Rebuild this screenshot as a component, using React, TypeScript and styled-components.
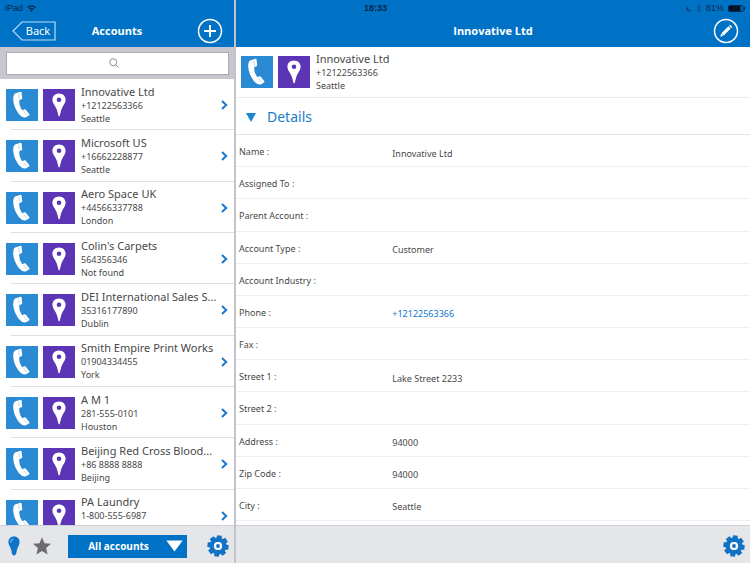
import React from "react";
import styled, { createGlobalStyle } from "styled-components";

const blue = "#0072c6";
const headingFont = `"Open Sans", "Noto Sans", sans-serif`;

const GlobalStyle = createGlobalStyle`
  *, *::before, *::after { box-sizing: border-box; }
  body { margin: 0; background: #fff; }
  body, button, input, select { font-family: "Noto Sans", "Open Sans", sans-serif; }
  button { padding: 0; border: 0; background: none; cursor: pointer; }
  h1, h2, h3, p, ul, dl, dd, dt { margin: 0; padding: 0; font-weight: 400; }
  svg { display: block; }
`;

const Page = styled.div`
  position: relative;
  display: flex;
  height: 100vh;
  min-height: 480px;
  overflow: hidden;
  color: #484848;
`;

const StatusBar = styled.div`
  position: absolute;
  inset: 0 0 auto 0;
  display: grid;
  grid-template-columns: 1fr auto 1fr;
  align-items: center;
  height: 16px;
  padding: 0 4px 0 5px;
  font: 9px/16px "Liberation Sans", sans-serif;
  color: #06264a;
`;

const StatusGroup = styled.div<{ $end?: boolean }>`
  display: flex;
  align-items: center;
  gap: 4px;
  justify-content: ${(p) => (p.$end ? "flex-end" : "flex-start")};
`;

const Clock = styled.time`
  font-weight: 700;
`;

const Sidebar = styled.aside`
  display: flex;
  flex-direction: column;
  flex: 0 0 236px;
  min-width: 0;
  border-right: 2px solid #c3c3cb;
`;

const Main = styled.main`
  display: flex;
  flex-direction: column;
  flex: 1;
  min-width: 0;
`;

const Header = styled.header`
  display: grid;
  grid-template-columns: 60px 1fr 60px;
  align-items: center;
  flex: none;
  height: 47px;
  padding-top: 15px;
  background: ${blue};
`;

const Title = styled.h1`
  grid-column: 2;
  font-family: ${headingFont};
  font-size: 11px;
  font-weight: 700;
  line-height: 16px;
  text-align: center;
  color: #fff;
`;

const BackButton = styled.button`
  position: relative;
  width: 44px;
  height: 20px;
  margin-left: 12px;
  padding-left: 8px;
  font-size: 11px;
  line-height: 18px;
  color: #fff;
`;

const BackOutline = styled.svg`
  position: absolute;
  inset: 0;
`;

const RoundButton = styled.button<{ $edge: number }>`
  justify-self: end;
  margin-right: ${(p) => p.$edge}px;
`;

const SearchBar = styled.label`
  position: relative;
  display: flex;
  flex: none;
  height: 32px;
  padding: 5px 5px 4px 6px;
  background: #c8c7cf;
`;

const SearchInput = styled.input`
  flex: 1;
  min-width: 0;
  border: 1px solid #acabb3;
  padding: 0 8px;
  background: #fff;
  font-size: 11px;
`;

const SearchIcon = styled.svg`
  position: absolute;
  inset: 0 6px 0 0;
  margin: auto;
`;

const ListViewport = styled.div`
  flex: 1;
  min-height: 0;
  overflow: hidden;
`;

const AccountList = styled.ul`
  display: grid;
  grid-template-columns: minmax(0, 1fr);
  grid-auto-rows: 1fr;
  height: calc(100% + 16px);
  list-style: none;
`;

const AccountRow = styled.li`
  position: relative;
  display: flex;
  align-items: center;
  padding: 1px 5px 0 6px;

  &::after {
    content: "";
    position: absolute;
    inset: auto 0 0 11px;
    border-bottom: 1px solid #dfdfe2;
  }
`;

const ContactBlock = styled.div`
  display: flex;
  align-items: center;
  gap: 5px;
  flex: 1;
  min-width: 0;
`;

const Tile = styled.button<{ $color: string }>`
  flex: none;
  width: 32px;
  height: 32px;
  background: ${(p) => p.$color};
`;

const ContactText = styled.div`
  flex: 1;
  min-width: 0;
  padding: 0 0 2px 1px;
`;

const Name = styled.h2`
  overflow: hidden;
  font-size: 11px;
  line-height: 15px;
  white-space: nowrap;
  text-overflow: ellipsis;
`;

const Line = styled.p`
  font-size: 9px;
  line-height: 13px;
`;

const Footer = styled.footer`
  display: flex;
  align-items: center;
  flex: none;
  height: 38px;
  padding: 3px 5px 0 7px;
  border-top: 1px solid #cfd0d5;
  background: #e4e6ea;
`;

const FooterButton = styled.button<{ $gap?: number; $end?: boolean }>`
  flex: none;
  margin-left: ${(p) => (p.$end ? "auto" : `${p.$gap ?? 0}px`)};
`;

const FilterBox = styled.label`
  position: relative;
  flex: 0 0 119px;
  margin-left: 16px;
`;

const FilterSelect = styled.select`
  display: block;
  width: 100%;
  height: 23px;
  padding: 0 28px 0 10px;
  border: 0;
  border-radius: 0;
  appearance: none;
  background: ${blue};
  font-family: ${headingFont};
  font-size: 10px;
  font-weight: 700;
  text-align: center;
  text-align-last: center;
  color: #fff;
`;

const FilterArrow = styled.svg`
  position: absolute;
  inset: 0 4px 0 auto;
  margin: auto 0;
  pointer-events: none;
`;

const Summary = styled.section`
  display: flex;
  flex: none;
  height: 51px;
  padding: 0 5px;
  border-bottom: 1px solid #e9ecf0;
`;

const SectionToggle = styled.button`
  display: flex;
  align-items: center;
  gap: 11px;
  flex: none;
  height: 37px;
  padding: 2px 10px 0;
  border-bottom: 1px solid #e2e5e8;
  font-size: 14px;
  line-height: 20px;
  color: #1a7dc8;
`;

const Fields = styled.dl`
  display: grid;
  grid-auto-rows: 1fr;
  flex: 1;
  min-height: 0;
  padding-bottom: 4px;
`;

const Field = styled.div`
  display: grid;
  grid-template-columns: 3fr 7fr;
  align-items: center;
  padding-left: 3px;
  border-bottom: 1px solid #edeff1;
  font-size: 9px;
  line-height: 14px;
`;

const FieldLabel = styled.dt`
  padding-top: 3px;
`;

const FieldValue = styled.dd`
  padding-top: 6px;
`;

const PhoneLink = styled.a`
  color: #0f74cc;
  text-decoration: none;
`;

function PhoneIcon() {
  return (
    <svg width="32" height="32" viewBox="0 0 32 32" aria-hidden="true">
      <path
        fill="#fff"
        d="M9 4.4 L14.6 2.8 Q15.5 2.8 15.6 3.8 L16.2 9.2 Q16.2 10 15.4 10.2 L13.4 10.9 Q12.4 15.6 16.3 21.3 L18.4 20.3 Q19.3 20 19.8 20.7 L23.4 25.2 Q23.8 26 23 26.6 L20 28.2 Q16.6 29.4 12.8 25 Q7.6 18.2 7.2 10.6 Q7.1 5.8 9 4.4Z"
      />
      <path d="M12.6 4.6 L13.4 9.4 M17.6 22.2 L20.6 26" stroke="#8cbfe8" strokeWidth="0.6" fill="none" />
    </svg>
  );
}

function PinIcon() {
  return (
    <svg width="32" height="32" viewBox="0 0 32 32" aria-hidden="true">
      <path
        fill="#fff"
        fillRule="evenodd"
        d="M16 4.4 C20 4.4 22.6 7.2 22.6 10.8 C22.6 14.6 19.2 17 18 22 L16.6 27.2 H15.6 L14.2 22 C13 17 9.4 14.6 9.4 10.8 C9.4 7.2 12 4.4 16 4.4Z M16 8.4 A2.3 2.3 0 1 0 16 13 A2.3 2.3 0 1 0 16 8.4Z"
      />
    </svg>
  );
}

function GearIcon() {
  const teeth = [0, 45, 90, 135, 180, 225, 270, 315];
  return (
    <svg width="22" height="22" viewBox="-11 -11 22 22" aria-hidden="true">
      <g fill="#1272c4">
        {teeth.map((angle) => (
          <path key={angle} d="M-2.8 -7 L-2.3 -10.6 H2.3 L2.8 -7Z" transform={`rotate(${angle + 8})`} />
        ))}
      </g>
      <circle r="6.2" fill="none" stroke="#1272c4" strokeWidth="4.4" />
      <circle r="4.1" fill="#f2f6fa" />
      <circle r="1.9" fill="#1272c4" />
    </svg>
  );
}

function Contact({ name, phone, city }: Account) {
  return (
    <ContactBlock>
      <Tile $color="#2b8ad4" aria-label={`Call ${name}`}>
        <PhoneIcon />
      </Tile>
      <Tile $color="#5c34b6" aria-label={`Show ${name} on map`}>
        <PinIcon />
      </Tile>
      <ContactText>
        <Name>{name}</Name>
        <Line>{phone}</Line>
        <Line>{city}</Line>
      </ContactText>
    </ContactBlock>
  );
}

type Account = { name: string; phone: string; city: string };

const accounts: Account[] = [
  { name: "Innovative Ltd", phone: "+12122563366", city: "Seattle" },
  { name: "Microsoft US", phone: "+16662228877", city: "Seattle" },
  { name: "Aero Space UK", phone: "+44566337788", city: "London" },
  { name: "Colin's Carpets", phone: "564356346", city: "Not found" },
  { name: "DEI International Sales S...", phone: "35316177890", city: "Dublin" },
  { name: "Smith Empire Print Works", phone: "01904334455", city: "York" },
  { name: "A M 1", phone: "281-555-0101", city: "Houston" },
  { name: "Beijing Red Cross Blood...", phone: "+86 8888 8888", city: "Beijing" },
  { name: "PA Laundry", phone: "1-800-555-6987", city: "Houston" },
];

const fields: [string, string][] = [
  ["Name", "Innovative Ltd"],
  ["Assigned To", ""],
  ["Parent Account", ""],
  ["Account Type", "Customer"],
  ["Account Industry", ""],
  ["Phone", "+12122563366"],
  ["Fax", ""],
  ["Street 1", "Lake Street 2233"],
  ["Street 2", ""],
  ["Address", "94000"],
  ["Zip Code", "94000"],
  ["City", "Seattle"],
];

export default function App() {
  return (
    <>
      <GlobalStyle />
      <Page>
        <Sidebar>
          <Header>
            <BackButton>
              <BackOutline width="44" height="20" viewBox="0 0 44 20" fill="none" stroke="#b9dcf7" aria-hidden="true">
                <path d="M10 1 H43 V19 H10 L1 10Z" strokeWidth="1.2" />
              </BackOutline>
              Back
            </BackButton>
            <Title>Accounts</Title>
            <RoundButton $edge={11} aria-label="Add account">
              <svg width="26" height="26" viewBox="0 0 26 26" fill="none" stroke="#fff" aria-hidden="true">
                <circle cx="13" cy="13" r="11.5" strokeWidth="1.5" />
                <path d="M13 7 V19 M7 13 H19" strokeWidth="2" />
              </svg>
            </RoundButton>
          </Header>
          <SearchBar>
            <SearchInput type="search" aria-label="Search accounts" />
            <SearchIcon width="10" height="10" viewBox="0 0 10 10" fill="none" stroke="#8c8c92" aria-hidden="true">
              <circle cx="4.2" cy="4.2" r="3.5" />
              <path d="M6.8 6.8 L9.6 9.6" />
            </SearchIcon>
          </SearchBar>
          <ListViewport>
            <AccountList>
              {accounts.map((account) => (
                <AccountRow key={account.name}>
                  <Contact {...account} />
                  <svg width="9" height="10" viewBox="0 0 9 10" fill="none" stroke="#1b78c8" strokeWidth="2" aria-hidden="true">
                    <path d="M2 1 L6.2 5 L2 9" />
                  </svg>
                </AccountRow>
              ))}
            </AccountList>
          </ListViewport>
          <Footer>
            <FooterButton aria-label="Tips">
              <svg width="14" height="20" viewBox="0 0 14 20" aria-hidden="true">
                <path
                  fill="#0f73c9"
                  d="M7 0.5 C10.6 0.5 12.6 3 12.6 6 C12.6 9.4 10.4 11.4 9.8 14.4 L9.2 17.6 Q8.6 19.5 7 19.5 Q5.4 19.5 4.9 17.6 L4.4 14.4 C3.8 11.4 1.4 9.4 1.4 6 C1.4 3 3.4 0.5 7 0.5Z"
                />
                <path d="M3.6 6.6 Q3.6 3.4 6.4 2.8" fill="none" stroke="#9fcbef" />
              </svg>
            </FooterButton>
            <FooterButton $gap={11} aria-label="Favourites">
              <svg width="20" height="18" viewBox="0 0 20 18" aria-hidden="true">
                <path
                  fill="#6c6c6e"
                  d="M10 0.3 L12.5 6.2 L19 6.8 L14.1 11 L15.6 17.4 L10 14 L4.4 17.4 L5.9 11 L1 6.8 L7.5 6.2Z"
                />
              </svg>
            </FooterButton>
            <FilterBox>
              <FilterSelect aria-label="Account filter">
                <option>All accounts</option>
              </FilterSelect>
              <FilterArrow width="17" height="12" viewBox="0 0 17 12" aria-hidden="true">
                <path d="M0.3 0.5 H16.7 L8.5 11.5Z" fill="#fff" />
              </FilterArrow>
            </FilterBox>
            <FooterButton $end aria-label="List settings">
              <GearIcon />
            </FooterButton>
          </Footer>
        </Sidebar>
        <Main>
          <Header>
            <Title>Innovative Ltd</Title>
            <RoundButton $edge={11} aria-label="Edit account">
              <svg width="26" height="26" viewBox="0 0 26 26" aria-hidden="true">
                <circle cx="13" cy="13" r="11.5" fill="none" stroke="#fff" strokeWidth="1.5" />
                <path d="M9.6 16.4 L16.6 9.4" stroke="#fff" strokeWidth="3.2" />
                <path d="M17.2 8.8 L18.2 7.8" stroke="#fff" strokeWidth="3.2" />
                <path d="M7.2 18.8 L8.2 15.6 L10.4 17.8Z" fill="#fff" />
              </svg>
            </RoundButton>
          </Header>
          <Summary>
            <Contact {...accounts[0]} />
          </Summary>
          <SectionToggle aria-expanded="true">
            <svg width="10" height="9" viewBox="0 0 10 9" aria-hidden="true">
              <path d="M0 0 H10 L5 9Z" fill="#1a86d0" />
            </svg>
            Details
          </SectionToggle>
          <Fields>
            {fields.map(([label, value]) => (
              <Field key={label}>
                <FieldLabel>{label} :</FieldLabel>
                <FieldValue>
                  {label === "Phone" ? <PhoneLink href={`tel:${value}`}>{value}</PhoneLink> : value}
                </FieldValue>
              </Field>
            ))}
          </Fields>
          <Footer>
            <FooterButton $end aria-label="Account settings">
              <GearIcon />
            </FooterButton>
          </Footer>
        </Main>
        <StatusBar>
          <StatusGroup>
            iPad
            <svg width="9" height="7" viewBox="0 0 9 7" fill="none" stroke="#06264a" aria-hidden="true">
              <path d="M0.5 2.6 Q4.5 -1 8.5 2.6 M2 4.4 Q4.5 2.2 7 4.4" strokeWidth="1.2" />
              <circle cx="4.5" cy="5.8" r="0.6" fill="#06264a" />
            </svg>
          </StatusGroup>
          <Clock>18:33</Clock>
          <StatusGroup $end>
            <svg width="6" height="7" viewBox="0 0 6 7" aria-hidden="true">
              <path d="M2 0.5 A3.2 3.2 0 1 0 5.8 5.2 A3.4 3.4 0 0 1 2 0.5Z" fill="#0a4a86" />
            </svg>
            <svg width="6" height="9" viewBox="0 0 6 9" fill="none" stroke="#0a4a86" strokeWidth="0.8" aria-hidden="true">
              <path d="M0.8 2.4 L5 6.4 L3 8.4 V0.6 L5 2.6 L0.8 6.6" />
            </svg>
            81%
            <svg width="18" height="7" viewBox="0 0 18 7" aria-hidden="true">
              <rect x="0.5" y="0.5" width="14.5" height="6" rx="1" fill="none" stroke="#06264a" />
              <rect x="1" y="1" width="11.5" height="5" fill="#021428" />
              <path d="M16.5 2.2 V4.8" stroke="#06264a" />
            </svg>
          </StatusGroup>
        </StatusBar>
      </Page>
    </>
  );
}
